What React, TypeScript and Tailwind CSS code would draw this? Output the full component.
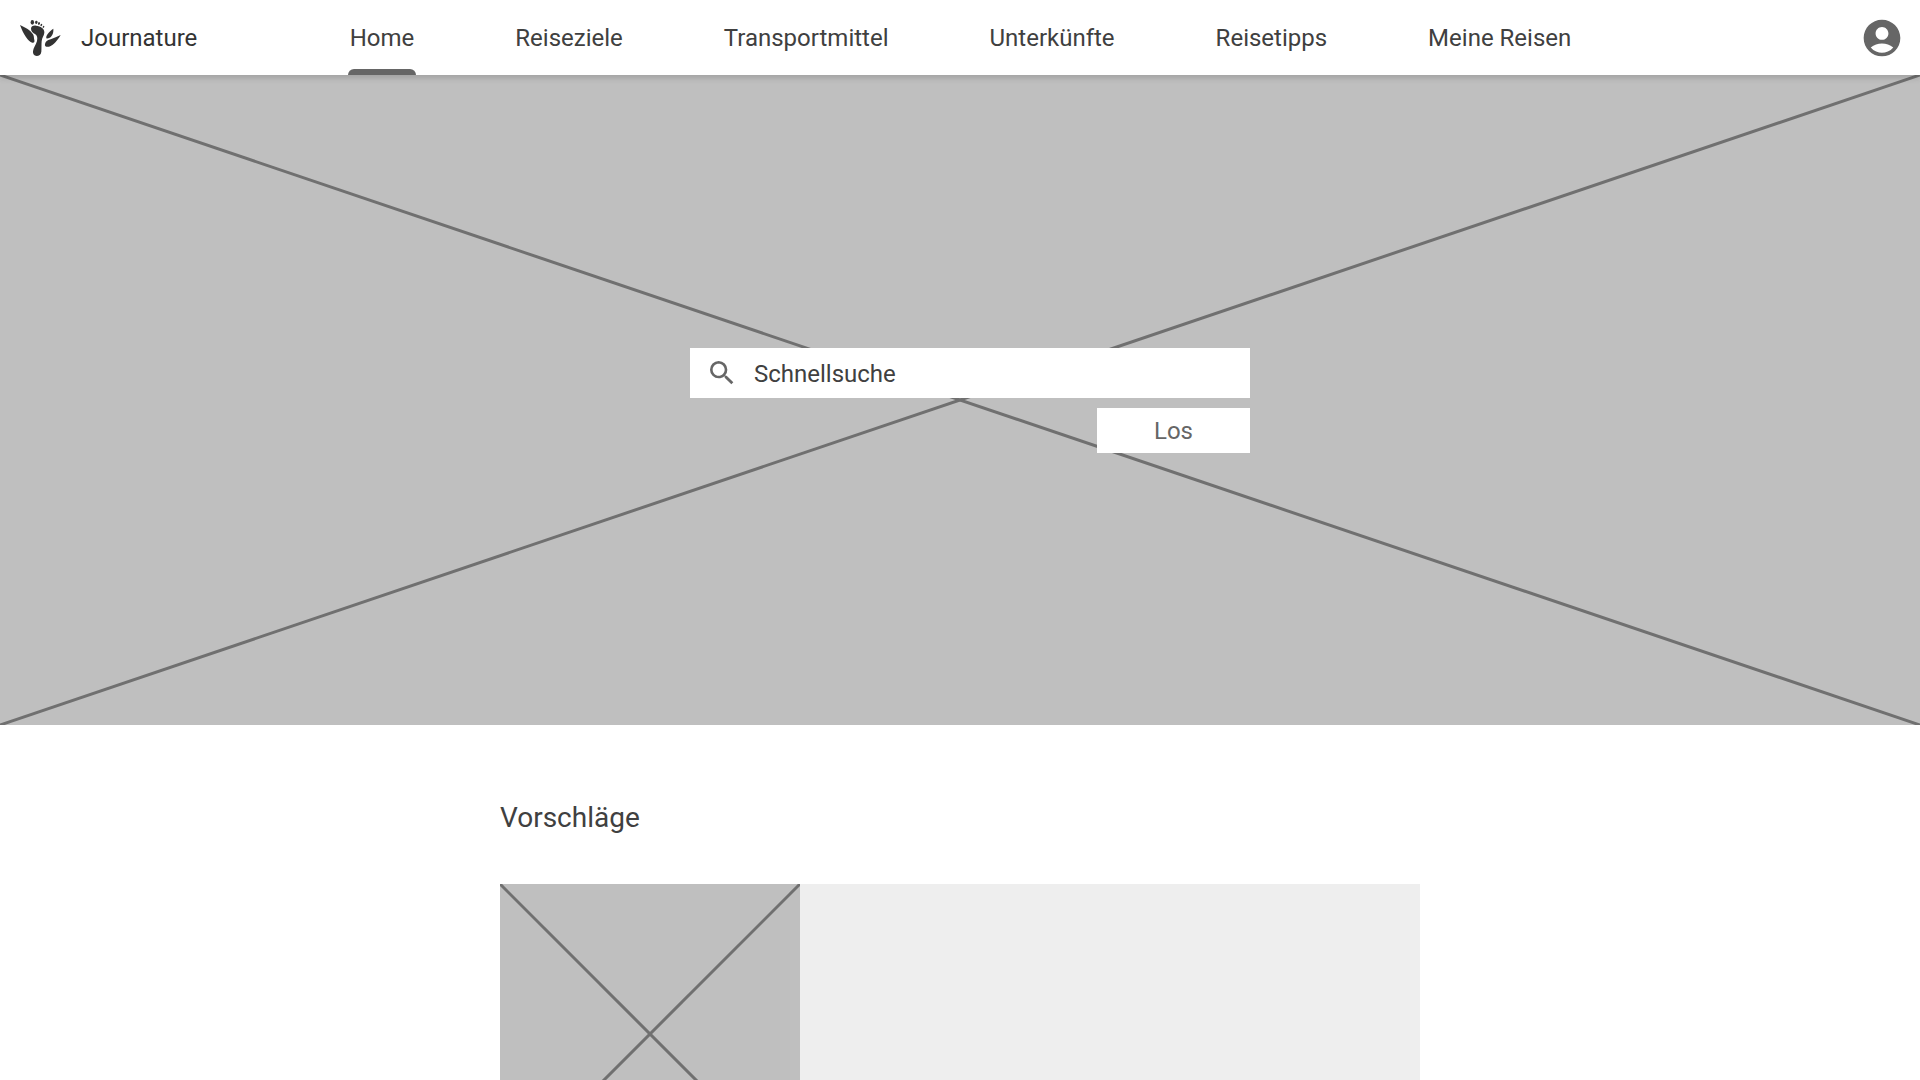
import React from "react";
import { MdAccountCircle, MdSearch } from "react-icons/md";

const navItems = [
  "Home",
  "Reiseziele",
  "Transportmittel",
  "Unterkünfte",
  "Reisetipps",
  "Meine Reisen",
];

function Logo() {
  return (
    <svg viewBox="18 21 123 114" className="h-[38px] w-[41px]" fill="#333333" aria-hidden="true">
      <ellipse cx="55" cy="31" rx="5.2" ry="7.2" />
      <ellipse cx="67" cy="31" rx="3.8" ry="4.8" transform="rotate(10 67 31)" />
      <ellipse cx="75" cy="34.5" rx="3" ry="4.2" transform="rotate(18 75 34.5)" />
      <ellipse cx="82" cy="39" rx="2.6" ry="3.6" transform="rotate(25 82 39)" />
      <ellipse cx="88.5" cy="44.5" rx="2.2" ry="3.2" transform="rotate(30 88.5 44.5)" />
      <path d="M51 50C51 43 58 40 66 41C80 42 92 50 91 62C90 72 84 76 83 88C82 100 83 108 82 119C81 128 75 132 68 132C60 132 56 126 57 118C58 108 66 98 69 87C71 78 70 72 64 67C57 62 51 58 51 50Z" />
      <path d="M18 39C34 46 50 55 57 67C61 74 59 78 61 84C62 89 61 93 55 92C42 89 28 66 18 39Z" />
      <path d="M118 50C119 62 115 73 107 77C103 79 98 81 97 78C95 70 106 58 118 50Z" />
      <path d="M140 69C131 84 119 101 105 104C98 106 91 103 93 96C95 89 99 84 110 82C120 78 130 74 140 69Z" />
    </svg>
  );
}

function Placeholder() {
  return (
    <svg
      className="absolute inset-0 size-full"
      stroke="#707070"
      strokeWidth="3"
      aria-hidden="true"
    >
      <line x1="0" y1="0" x2="100%" y2="100%" />
      <line x1="100%" y1="0" x2="0" y2="100%" />
    </svg>
  );
}

export default function App() {
  return (
    <div className="h-screen overflow-hidden bg-white font-['Roboto',sans-serif] text-[#404040]">
      <header className="relative z-10 flex h-[75px] items-center justify-between bg-white px-5 shadow-[0_3px_6px_rgba(0,0,0,0.16)]">
        <a href="#" className="flex flex-1 items-center gap-5 text-2xl text-[#333333]">
          <Logo />
          Journature
        </a>
        <nav className="h-full">
          <ul className="flex h-full gap-[97px] pl-px">
            {navItems.map((item, i) => (
              <li key={item} className="relative flex h-full items-center px-0.5">
                <a href="#" className="text-2xl whitespace-nowrap" aria-current={i === 0 ? "page" : undefined}>
                  {item}
                </a>
                {i === 0 && <span className="absolute inset-x-0 bottom-0 h-1.5 rounded-t-md bg-[#666666]" />}
              </li>
            ))}
          </ul>
        </nav>
        <div className="flex flex-1 justify-end">
          <button type="button" aria-label="Konto" className="-mr-1 text-[#666666]">
            <MdAccountCircle className="size-11" />
          </button>
        </div>
      </header>

      <main>
        <section className="relative flex h-[650px] flex-col items-center bg-[#bfbfbf] pt-[273px]">
          <Placeholder />
          <form className="relative ml-5 flex w-[560px] flex-col items-end gap-2.5" onSubmit={(e) => e.preventDefault()}>
            <label className="flex h-[50px] w-full items-center gap-4 bg-white px-4">
              <MdSearch className="size-8 text-[#666666]" aria-hidden="true" />
              <input
                type="search"
                aria-label="Schnellsuche"
                placeholder="Schnellsuche"
                className="min-w-0 flex-1 pt-0.5 text-2xl outline-none placeholder:text-[#404040]"
              />
            </label>
            <button type="submit" className="h-[45px] w-[153px] bg-white text-2xl text-[#666666]">
              Los
            </button>
          </form>
        </section>

        <section className="mx-auto w-[920px] max-w-full pt-[75px]">
          <h2 className="text-[28px] leading-9">Vorschläge</h2>
          <article className="mt-12 flex h-[300px] bg-[#eeeeee]">
            <div className="relative w-[300px] bg-[#bfbfbf]">
              <Placeholder />
            </div>
          </article>
        </section>
      </main>
    </div>
  );
}
